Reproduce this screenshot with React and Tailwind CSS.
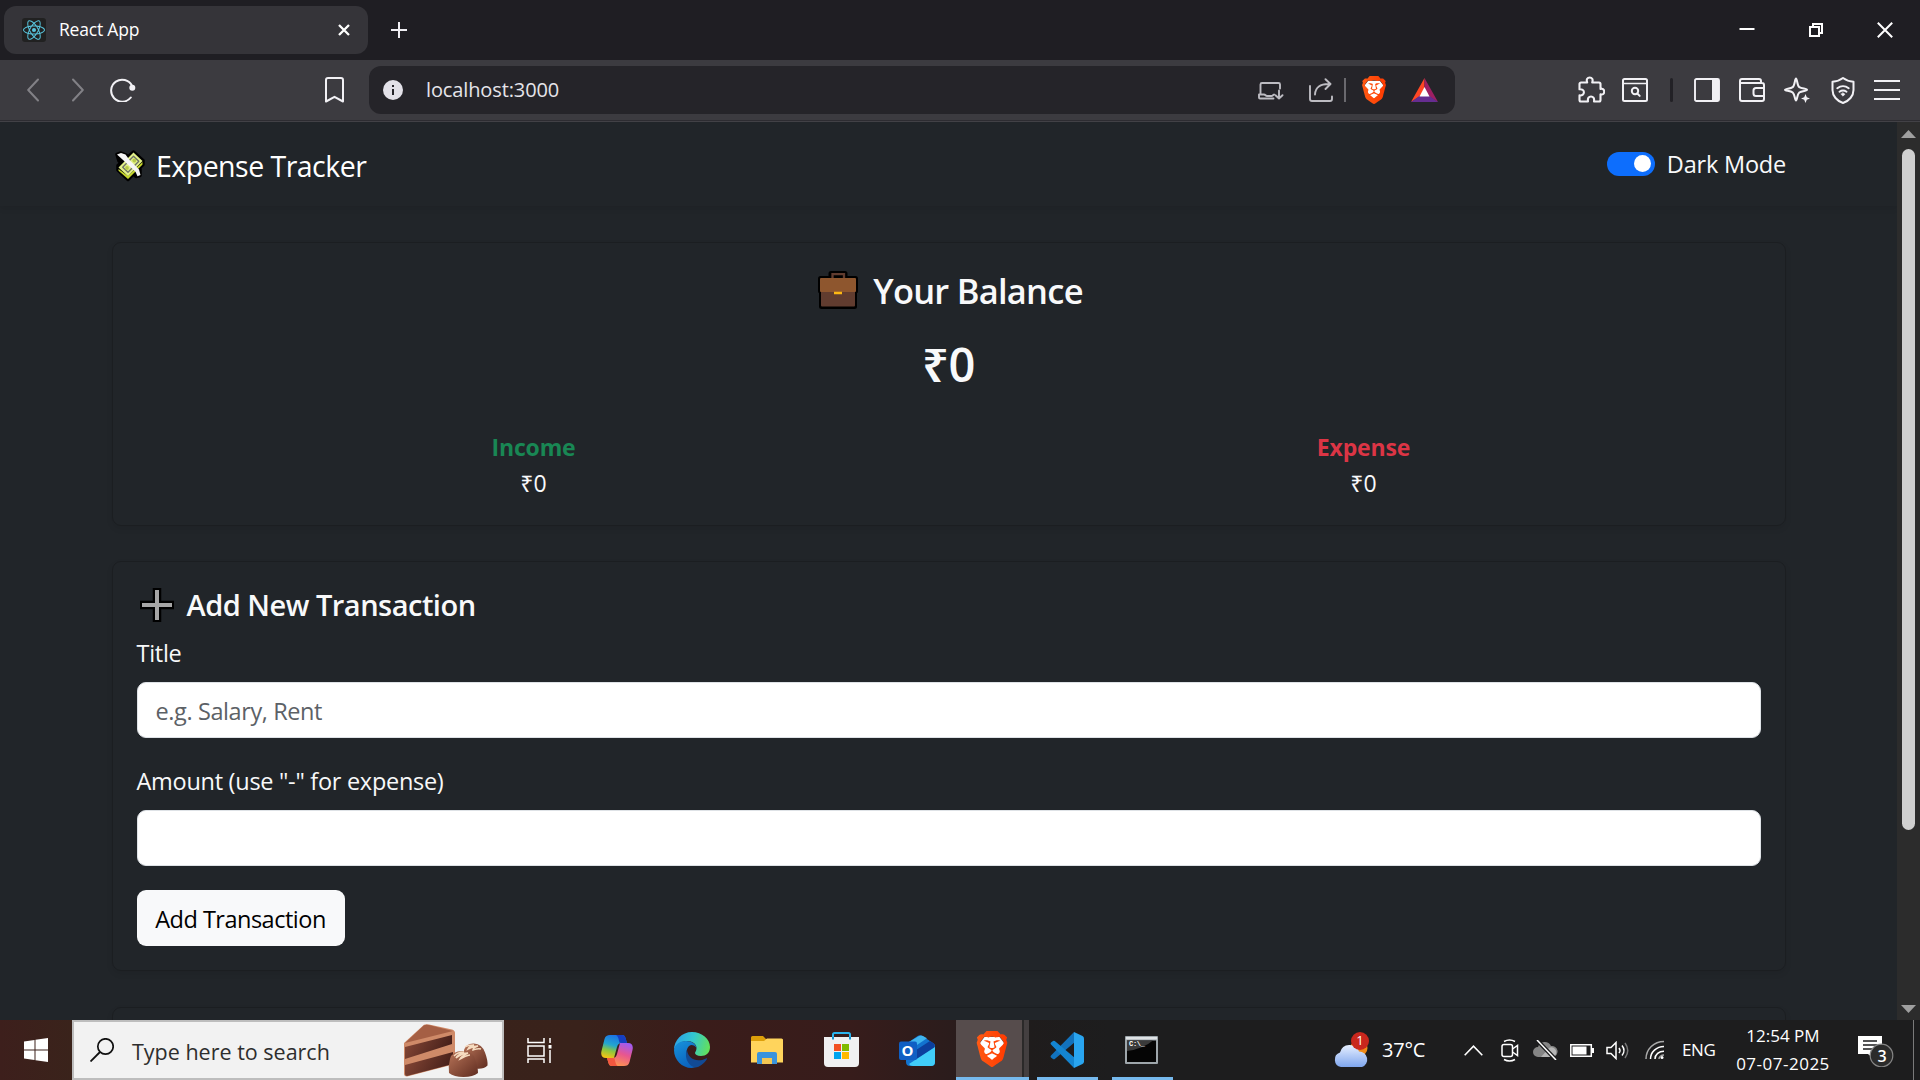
import { SiBrave, SiReact } from "react-icons/si";

const stroke = { fill: "none", stroke: "currentColor", strokeLinecap: "round", strokeLinejoin: "round" };

function Lion({ className, id }) {
  return (
    <span className={`relative block flex-none ${className}`}>
      <svg viewBox="0 0 24 24" className="absolute inset-0 h-full w-full">
        <path d="M7 4h10l3 4-3 9-5 4-5-4-3-9z" fill="#fff" />
      </svg>
      <svg width="0" height="0" className="absolute">
        <linearGradient id={id} x1="0" x2="1">
          <stop offset="0" stopColor="#ff5a14" />
          <stop offset="1" stopColor="#ff3a00" />
        </linearGradient>
      </svg>
      <SiBrave className="absolute inset-0 h-full w-full" style={{ fill: `url(#${id})` }} />
    </span>
  );
}

function TabBar() {
  return (
    <div className="flex h-[60px] flex-none items-center bg-[#1f1e23] pl-1 text-white">
      <div className="flex h-12 w-[364px] items-center rounded-xl bg-[#353439] pl-[18px] pr-[18px]">
        <span className="flex h-6 w-6 items-center justify-center rounded-[3px] bg-[#212121]">
          <SiReact className="h-[22px] w-[22px] text-[#58c4dc]" />
        </span>
        <span className="mb-0.5 ml-[13px] flex-1 text-[17.5px] tracking-[-0.2px]">React App</span>
        <svg className="h-3 w-3" viewBox="0 0 12 12">
          <path d="M1 1l10 10M11 1L1 11" stroke="#fff" strokeWidth="2.3" />
        </svg>
      </div>
      <svg className="ml-[23px] h-4 w-4" viewBox="0 0 16 16">
        <path d="M8 0v16M0 8h16" stroke="#f0eff3" strokeWidth="2" />
      </svg>
      <div className="ml-auto flex items-center pr-[27px]">
        <svg className="h-4 w-4" viewBox="0 0 16 16">
          <path d="M.5 7h15" stroke="#fff" strokeWidth="2" />
        </svg>
        <svg className="ml-[53px] h-4 w-4" viewBox="0 0 16 16">
          <path d="M2 5h9v9h-9zM5 5v-3h9v9h-3" fill="none" stroke="#fff" strokeWidth="2" />
        </svg>
        <svg className="ml-[53px] h-4 w-4" viewBox="0 0 16 16">
          <path d="M.8.8l14.400 14.400M15.200.8L.8 15.200" stroke="#fff" strokeWidth="2" />
        </svg>
      </div>
    </div>
  );
}

function ToolBar() {
  return (
    <div className="flex h-[62px] flex-none items-center border-b border-[#424146] bg-[#3c3b40] pb-px pl-[27px] text-[#f2f1f5] shadow-[inset_0_-1px_0_#2d2c31]">
      <svg className="h-6 w-3 text-[#828186]" viewBox="0 0 12 24" {...stroke} strokeWidth="2">
        <path d="M11 1.500L1.200 12 11 22.500" />
      </svg>
      <svg className="ml-[33px] h-6 w-3 text-[#828186]" viewBox="0 0 12 24" {...stroke} strokeWidth="2">
        <path d="M1 1.500L10.800 12 1 22.500" />
      </svg>
      <svg className="mb-px ml-[26px] h-6 w-[26px]" viewBox="0 0 26 24" {...stroke} strokeWidth="2">
        <path d="M20.800 19.500A11 11 0 1 1 22 7.800" />
        <circle cx="22.300" cy="9.800" r="3" fill="currentColor" stroke="none" />
      </svg>
      <svg className="ml-[189px] h-[26px] w-[19px]" viewBox="0 0 19 26" {...stroke} strokeWidth="2">
        <path d="M1 24.500V3a2 2 0 0 1 2-2h13a2 2 0 0 1 2 2v21.500l-8.500-4.700z" />
      </svg>
      <div className="ml-[25px] flex h-12 w-[1086px] flex-none items-center rounded-xl bg-[#252429] pl-[14px]">
        <svg className="h-5 w-5" viewBox="0 0 20 20">
          <circle cx="10" cy="10" r="10" fill="#e3e1e8" />
          <path d="M10 9v6M10 5v2" stroke="#252429" strokeWidth="2" />
        </svg>
        <span className="ml-[23px] text-[20px] tracking-[-0.12px] text-[#e6e4ea]">localhost:3000</span>
        <div className="ml-auto flex items-center pr-[17px] text-[#bdbcc2]">
          <svg className="mt-0.5 h-[18px] w-[26px]" viewBox="0 0 26 18" {...stroke} strokeWidth="1.900">
            <path d="M2.500 12.500V2.500A1.500 1.500 0 0 1 4 1h16.500A1.500 1.500 0 0 1 22 2.500v4M15.500 16.500H2A1 1 0 0 1 1 15.500v-3h5c1.500 0 1.500 1.500 3 1.500h4.500c1 0 1.500-1 2.500-1.500M21 8.500v8M17.500 13.200l3.500 3.300 3.500-3.300" />
          </svg>
          <svg className="ml-[25px] h-6 w-6" viewBox="0 0 24 24" {...stroke} strokeWidth="1.900">
            <path d="M1 8v13a2 2 0 0 0 2 2h18a2 2 0 0 0 2-2v-2.500M6 16.500C6.300 9.500 11 5.500 21 6M16.500 1.200l5 4.800-5 5" />
          </svg>
          <span className="ml-[11px] h-6 w-0.5 bg-[#6a696e]" />
          <Lion id="lion-a" className="ml-[14px] h-7 w-7" />
          <svg className="ml-[23px] h-6 w-[27px]" viewBox="0 0 27 24">
            <path d="M13.500 0L0 24l9.500-6 4-8z" fill="#ff4724" />
            <path d="M13.500 0L27 24l-9.500-6-4-8z" fill="#9e1f63" />
            <path d="M0 24l9-6.500h9L27 24z" fill="#662d91" />
            <path d="M13.500 9l-5 9.500h10z" fill="#fff" />
          </svg>
        </div>
      </div>
      <svg className="mb-0.5 ml-[123px] h-[27px] w-[27px]" viewBox="0 0 27 27" {...stroke} strokeWidth="2.100">
        <path d="M3 6.500h6.200C8 3.200 9.500 1.500 11.700 1.500s3.700 1.700 2.500 5H21a1.500 1.500 0 0 1 1.500 1.500v5c2.500-.7 3.700.8 3.700 2.700s-1.200 3.400-3.700 2.600V24a1.500 1.500 0 0 1-1.500 1.500h-5c.6-3.500-1-5-3-5s-3.600 1.500-3 5H3A1.500 1.500 0 0 1 1.500 24v-4.600c3 .3 4.400-1.200 4.400-3.100s-1.400-3.300-4.400-3V8A1.500 1.500 0 0 1 3 6.500z" />
      </svg>
      <svg className="ml-[17px] h-6 w-[26px]" viewBox="0 0 26 24" {...stroke} strokeWidth="2">
        <rect x="1" y="1" width="24" height="22" rx="1.500" />
        <path d="M1 5.500h24" strokeWidth="1.600" />
        <circle cx="13" cy="13" r="3.200" />
        <path d="M15.300 15.500l2.400 2.400" />
      </svg>
      <span className="ml-[22px] h-6 w-[3px] rounded bg-[#222126]" />
      <svg className="ml-[21px] h-6 w-[26px]" viewBox="0 0 26 24">
        <rect x="1" y="1" width="24" height="22" rx="1.500" fill="none" stroke="#f2f1f5" strokeWidth="1.900" />
        <path d="M18 1h7v22h-7z" fill="#f2f1f5" />
      </svg>
      <svg className="ml-[19px] h-6 w-[26px]" viewBox="0 0 26 24" {...stroke} strokeWidth="2">
        <path d="M1 5V3a2 2 0 0 1 2-2h17a2 2 0 0 1 2 2v2M1 3v18a2 2 0 0 0 2 2h20a2 2 0 0 0 2-2V7a2 2 0 0 0-2-2H1M25 10h-8a2.500 2.500 0 0 0-2.500 2.500v3A2.500 2.500 0 0 0 17 18h8" />
      </svg>
      <svg className="ml-[19px] h-[27px] w-[27px]" viewBox="0 0 27 27" {...stroke} strokeWidth="2">
        <path d="M12 1.500c1.200 0 1 7 3.300 8.600S23 11.500 23 12.800s-5.400.8-7.700 2.700S13.200 23.500 12 23.500s-1-6-3.300-8S1 14 1 12.800s5.400-1 7.700-2.700S10.800 1.500 12 1.500z" />
        <path d="M21.500 17l1.300 3.200 3.200 1.300-3.200 1.300-1.300 3.200-1.300-3.200-3.200-1.300 3.200-1.300z" fill="currentColor" stroke="none" />
      </svg>
      <svg className="ml-5 h-[27px] w-6" viewBox="0 0 24 27" {...stroke} strokeWidth="2">
        <path d="M12 1c3 2.300 6.500 3.500 10.500 3.700V13c0 6-4.500 11-10.500 13C6 24 1.500 19 1.500 13V4.700C5.500 4.500 9 3.300 12 1z" />
        <path d="M6.300 11.200c3.400-2.600 8-2.600 11.400 0M8.500 14.700c2.200-1.600 4.800-1.600 7 0" />
        <path d="M12 15.800l2 1.400-2 2-2-2z" fill="currentColor" strokeWidth="0.500" />
      </svg>
      <svg className="ml-[19px] h-6 w-[26px]" viewBox="0 0 26 24">
        <path d="M0 3h26M0 12h26M0 21h26" stroke="#f2f1f5" strokeWidth="2" />
      </svg>
    </div>
  );
}

function MoneyIcon() {
  return (
    <svg className="h-8 w-[30px] flex-none" viewBox="0 0 30 32">
      <g strokeLinejoin="round">
        <path d="M18.500 2L28 10.500v4L13 29.500l-10-9.500v-4.500z" fill="#000" stroke="#000" strokeWidth="3.500" />
        <path d="M2 4.500l4-1.500 5 2 14 14.500v6l-4 1L4 11z" fill="#000" stroke="#000" strokeWidth="3.500" />
        <path d="M3.500 19v1.800L13 29l14.500-14.500v-2.500L13 26z" fill="#c5d62d" />
        <path d="M18.500 2.500L27.500 11 13 26.200 3.500 17.500z" fill="#e2f088" />
        <path d="M18.500 6.300l5.300 5L13 22.300l-5.300-5z" fill="none" stroke="#6d7168" strokeWidth="1.300" />
        <circle cx="19.300" cy="10.500" r="1.900" fill="#b6c94a" />
        <circle cx="12" cy="18" r="1.900" fill="#b6c94a" />
        <path d="M2 4.500l4-1.500 4.500 1.500 4 5.500 9.500 9.500 1.500 5.500-3 1.200-2-4.500-10-9.500-5.500-5z" fill="#f5f5f5" />
      </g>
    </svg>
  );
}

function Briefcase() {
  return (
    <svg className="h-[38px] w-10 flex-none" viewBox="0 0 40 38">
      <path d="M13 7V2.500L14.500 2.500h11L27 2.500V7" fill="none" stroke="#000" strokeWidth="5" strokeLinejoin="round" />
      <rect x="0" y="5" width="40" height="17.500" rx="2.500" fill="#000" />
      <rect x="1" y="12" width="38" height="26" rx="2.500" fill="#000" />
      <path d="M14.500 7V3.200h11.500v4" fill="none" stroke="#613c2f" strokeWidth="2.300" />
      <rect x="3" y="20" width="34" height="15.500" rx="1" fill="#613c2f" />
      <rect x="2" y="7" width="36" height="14" rx="1" fill="#8e562e" />
      <path d="M16 22h8" stroke="#fdb813" strokeWidth="2.500" />
    </svg>
  );
}

function PlusEmoji() {
  return (
    <svg className="h-[34px] w-[34px] flex-none" viewBox="0 0 34 34">
      <path d="M17 0v34M0 17h34" stroke="#000" strokeWidth="8.500" />
      <path d="M17 2v30M2 17h30" stroke="#a6a6a6" strokeWidth="4" />
    </svg>
  );
}

const CARD = "mx-auto w-[1674px] rounded-[9px] border border-[#1b1e21] shadow-[0_3px_6px_rgba(0,0,0,0.075)]";

function Page() {
  return (
    <main className="flex min-h-0 flex-1 bg-[#212529] text-[#f8f9fa]">
      <div className="flex-1 overflow-hidden">
        <nav className="flex h-[84px] items-center justify-between pl-[115px] pr-[111px] shadow-[0_3px_6px_rgba(0,0,0,0.075)]">
          <div className="flex items-center pt-[3px] text-white">
            <MoneyIcon />
            <span className="ml-[11px] text-[28.5px] leading-[42px] tracking-[-0.52px]">Expense Tracker</span>
          </div>
          <label className="flex items-center text-[23.5px] tracking-[-0.2px]">
            <span className="mb-px flex h-6 w-12 items-center justify-end rounded-full bg-[#0d6efd] pr-1">
              <span className="h-[17px] w-[17px] rounded-full bg-white" />
            </span>
            <span className="ml-3 mt-0.5">Dark Mode</span>
          </label>
        </nav>

        <section className={`${CARD} mt-9 h-[284px] p-6`}>
          <div className="flex h-[43px] items-center justify-center pl-1 pt-[3px]">
            <Briefcase />
            <h4 className="ml-[15px] text-[34.5px] font-semibold leading-[43px] tracking-[-0.75px]">Your Balance</h4>
          </div>
          <h2 className="mt-[25px] text-center text-[47px] font-semibold leading-[58px] tracking-[-0.5px]">₹0</h2>
          <div className="-mx-[18px] mt-[36px] grid grid-cols-2 text-center text-[23px] leading-9">
            <div>
              <p className="font-bold tracking-[-0.15px] text-[#198754]">Income</p>
              <p>₹0</p>
            </div>
            <div>
              <p className="font-bold tracking-[-0.15px] text-[#dc3545]">Expense</p>
              <p>₹0</p>
            </div>
          </div>
        </section>

        <section className={`${CARD} mt-[35px] h-[410px] px-6 pt-[25px]`}>
          <div className="flex h-9 items-center pl-[3px]">
            <PlusEmoji />
            <h5 className="ml-[13px] text-[29px] font-semibold leading-9 tracking-[-0.5px]">Add New Transaction</h5>
          </div>
          <div className="mt-3 text-[23.5px] leading-9 tracking-[-0.28px]">
            <label className="block">Title</label>
            <div className="mt-[11px] flex h-14 items-center rounded-[9px] border border-[#dee2e6] bg-white px-[18px] pt-0.5 text-[#5c6166]">
              <span className="tracking-[-0.4px]">e.g. Salary, Rent</span>
            </div>
            <label className="mt-[25px] block">Amount (use "-" for expense)</label>
            <div className="mt-[11px] h-14 rounded-[9px] border border-[#dee2e6] bg-white" />
            <button className="mt-6 h-14 w-52 rounded-[9px] bg-[#f8f9fa] pt-0.5 tracking-[-0.5px] text-black">Add Transaction</button>
          </div>
        </section>

        <section className={`${CARD} mt-9 h-40`} />
      </div>

      <div className="flex w-[23px] flex-none flex-col items-center bg-[#2c2c2c]">
        <svg className="mt-2 h-2 w-[15px]" viewBox="0 0 15 8"><path d="M7.500 0L15 8H0z" fill="#9f9f9f" /></svg>
        <div className="mt-[11px] h-[681px] w-[13px] rounded-full bg-[#d0d0d0]" />
        <svg className="mb-[7px] mt-auto h-2 w-[15px]" viewBox="0 0 15 8"><path d="M7.500 8L15 0H0z" fill="#9f9f9f" /></svg>
      </div>
    </main>
  );
}

function Cake() {
  return (
    <svg className="h-[53px] w-[84px] flex-none" viewBox="0 0 84 53">
      <defs>
        <linearGradient id="cake" x1="0" x2="1" y2="0.300"><stop offset="0" stopColor="#8a4a38" /><stop offset="1" stopColor="#47201a" /></linearGradient>
        <linearGradient id="choc" x1="0" y1="0" x2="1" y2="1"><stop offset="0" stopColor="#b87458" /><stop offset="1" stopColor="#5f2c20" /></linearGradient>
      </defs>
      <path d="M0 19L20 .8Q22 0 25 .6L48 5.500Q51 6.500 51 9v31L3 52.500Q0 52 0 50z" fill="#cf8a68" />
      <path d="M1 19L20 1.200Q22 .4 25 1L49 7z" fill="#a55f44" />
      <path d="M1 23L48 11v9L1 35z" fill="url(#cake)" />
      <path d="M1 41l48-13v12L3 52q-2 0-2-2z" fill="url(#cake)" />
      <path d="M60 26Q62 19 70 19.500t11 9q3 8 2.500 13-4 4-12 3L60 36z" fill="url(#choc)" />
      <path d="M46 35Q48 27 58.500 27T71 35q3 8 3 14-5 4-14.500 4T45 49q-1-7 1-14z" fill="url(#choc)" />
      <path d="M50 32c3-3 7-4 10-4-4 2-7 4-8 6 4-3 8-5 12-5-4 2-7 4-8 6 4-2 7-4 10-4M61 23c3-2 6-2 9-2-3 1-5 2-6 4 4-2 7-3 10-3-3 1-5 2-5 4 3-1 5-2 8-1" fill="none" stroke="#f6dcc0" strokeWidth="1.500" />
    </svg>
  );
}

function Copilot() {
  return (
    <svg className="h-[31px] w-8" viewBox="0 0 32 31">
      <defs>
        <linearGradient id="co-a" x1="0.600" y1="0" x2="0.300" y2="1"><stop offset="0" stopColor="#1b6fe8" /><stop offset="0.450" stopColor="#23a6cf" /><stop offset="0.700" stopColor="#8cc63f" /><stop offset="1" stopColor="#f3c316" /></linearGradient>
        <linearGradient id="co-b" x1="0.700" y1="0" x2="0.300" y2="1"><stop offset="0" stopColor="#a05bf0" /><stop offset="0.450" stopColor="#e8568f" /><stop offset="1" stopColor="#ff9a4a" /></linearGradient>
      </defs>
      <path d="M15 0h6c2 0 3 1 3.500 3l1.500 5h-5c-3 0-4 1-5 4l-3 11H5c-4 0-5.500-3-4.500-7l3-12C4.500 1 6 0 9 0z" fill="url(#co-a)" />
      <path d="M15 0h6c2 0 3 1 3.500 3l1.500 5h-5l-2.500-.2C17.500 3 17 1 15 0z" fill="#153ec2" />
      <path d="M17 31h-6c-2 0-3-1-3.500-3L6 23h5c3 0 4-1 5-4l3-11h8c4 0 5.500 3 4.500 7l-3 12c-1 3-2.500 4-5.500 4z" fill="url(#co-b)" />
      <path d="M17 31h-6c-2 0-3-1-3.500-3L6 23h5l2.500.2c1 4.800 1.500 6.800 3.500 7.800z" fill="#f2573f" />
    </svg>
  );
}

function Edge() {
  return (
    <svg className="h-9 w-9" viewBox="0 0 36 36">
      <defs>
        <linearGradient id="ed-a" x1="0" y1="0.300" x2="1" y2="0.500"><stop offset="0" stopColor="#2b9fe6" /><stop offset="0.500" stopColor="#33c7d0" /><stop offset="1" stopColor="#62e05d" /></linearGradient>
        <linearGradient id="ed-b" x1="0" y1="0" x2="0.500" y2="1"><stop offset="0" stopColor="#1793dc" /><stop offset="1" stopColor="#0b62bd" /></linearGradient>
      </defs>
      <path d="M0 18C0 8 8 0 18 0s18 7 18 15c0 6-4 9-9 9-4 0-6-1.500-6-3 0-1 1.500-2 1.500-5 0-4-4-7-9.500-7C7 9 1.500 13 0 18z" fill="url(#ed-a)" />
      <path d="M0 18C1 12 6 9 12 9c6 0 10 3 10.500 7-1-2-3-3-5-3-3 0-5 4-5 8 0 7 6 12 12 12-2 2-5 3-7 3C8 36 0 28 0 18z" fill="url(#ed-b)" />
      <path d="M13 18c-2 3-2 14 8 17.600 5-.6 9-4 12-8.600.5-1-.3-1-1-.6-9 4.500-18 .6-19-8.400z" fill="#124a94" />
    </svg>
  );
}

function Explorer() {
  return (
    <svg className="h-7 w-8" viewBox="0 0 32 28">
      <path d="M0 1.500Q0 0 1.500 0H12l3 3H30.500Q32 3 32 4.500V24H0z" fill="#dd9f0a" />
      <path d="M0 5h13l3-2.500h14.500Q32 2.500 32 4v22.500H0z" fill="#ffd45c" />
      <path d="M6 28V18q0-2 2-2h16q2 0 2 2v10h-5v-6H11v6z" fill="#3a93dc" />
      <path d="M11 28v-6h10v6z" fill="#f3c653" />
    </svg>
  );
}

function Store() {
  return (
    <svg className="h-9 w-[35px]" viewBox="0 0 35 36">
      <path d="M9 9V2.500Q9 1 10.500 1h14Q26 1 26 2.500V9" fill="none" stroke="#2bb4ee" strokeWidth="2" />
      <path d="M0 5h35v26q0 4-4 4H4q-4 0-4-4z" fill="#f0f0f1" />
      <path d="M9 5v2.500M26 5v2.500" stroke="#1593cf" strokeWidth="2" />
      <path d="M10 12h7v7h-7z" fill="#f25022" /><path d="M18 12h7v7h-7z" fill="#7fba00" />
      <path d="M10 20h7v7h-7z" fill="#00a4ef" /><path d="M18 20h7v7h-7z" fill="#ffb900" />
    </svg>
  );
}

function Outlook() {
  return (
    <span className="relative block h-[31px] w-9">
      <svg className="h-full w-full" viewBox="0 0 36 31">
        <path d="M7 9L19 .8q2-1 4 0L34 8q2 1 2 3v16q0 4-4 4H11q-4 0-4-4z" fill="#1273cf" />
        <path d="M10 7l10-6q2-1 4 0l4 2.300L12 14z" fill="#3fb4ee" />
        <path d="M14 17L31 6l4.500 3v4L17 25z" fill="#0c3f9d" />
        <path d="M36 12v15q0 4-4 4H14q-3 0-4-2z" fill="#41cdf8" />
        <rect y="6.500" width="18" height="18.500" rx="2" fill="#0f5fc4" />
      </svg>
      <span className="absolute left-0 top-[6px] w-[18px] text-center text-[15px] font-bold leading-[19px] text-white">O</span>
    </span>
  );
}

function VSCode() {
  return (
    <svg className="h-9 w-9" viewBox="0 0 36 36">
      <path d="M26 0L3 23.500q-1 1 0 2L5 27q.8.600 1.800 0L27 10z" fill="#1272bd" />
      <path d="M26 36L3 12.500q-1-1 0-2L5 9q.8-.6 1.800 0L27 26z" fill="#1485d1" />
      <path d="M26 0l8.500 4q1.500.8 1.500 2.500v23q0 1.700-1.500 2.500L26 36z" fill="#29a5f0" />
    </svg>
  );
}

function Cmd() {
  return (
    <span className="relative block h-7 w-[33px]">
      <svg className="h-full w-full" viewBox="0 0 33 28">
        <rect width="33" height="28" rx="1" fill="#9ea6ab" />
        <path d="M1 1h31v2.500H1z" fill="#dfe3e6" />
        <path d="M2 4.500h29V26H2z" fill="#050505" />
        <path d="M2 4.500h26Q18 13 2 15z" fill="#3a3a3a" />
      </svg>
      <span className="absolute left-[4px] top-[4px] font-['Liberation_Mono'] text-[7px] font-bold leading-[8px] tracking-[-0.3px] text-white">C:\_</span>
    </span>
  );
}

function TaskView() {
  return (
    <svg className="mr-[3px] h-[25px] w-[26px]" viewBox="0 0 26 25">
      <path d="M1 0v4.500h16V0M1 8h16v10H1zM1 25v-4h16v4M23 0v5M23 12v13" fill="none" stroke="#fff" strokeWidth="1.500" />
      <path d="M21.500 7h3v3.500h-3z" fill="#fff" />
    </svg>
  );
}

function Tray() {
  return (
    <div className="ml-auto flex h-full items-center text-white">
      <span className="relative block h-[35px] w-9 flex-none">
        <svg className="h-full w-full" viewBox="0 0 36 35">
          <defs><linearGradient id="cl" x1="0" y1="0" x2="0" y2="1"><stop offset="0" stopColor="#e6efff" /><stop offset="1" stopColor="#7fa6ee" /></linearGradient></defs>
          <circle cx="26" cy="15" r="8.500" fill="#f08a16" />
          <path d="M8 34a7.500 7.500 0 0 1-1-14.500 10 10 0 0 1 19-1 8 8 0 0 1 3 15.500z" fill="url(#cl)" />
        </svg>
        <span className="absolute -top-px left-[18px] flex h-[18px] w-[18px] items-center justify-center rounded-full bg-[#c9271d] text-[13px]">1</span>
      </span>
      <span className="ml-[13px] w-[46px] text-[20px] tracking-[-0.2px]">37°C</span>
      <svg className="ml-9 h-[11px] w-[19px]" viewBox="0 0 19 11"><path d="M.7 10.300L9.500 1.200l8.800 9.100" fill="none" stroke="#fff" strokeWidth="1.600" /></svg>
      <svg className="ml-[18px] h-[23px] w-[18px]" viewBox="0 0 18 23" fill="none" stroke="#fff" strokeWidth="1.500">
        <rect x="1" y="5.500" width="10.500" height="12" rx="2" /><path d="M11.500 10l5-3.500v10l-5-3.500M3 2.500Q8.500-.5 14 2.500M3 20.500q5.500 3 11 0" />
      </svg>
      <svg className="ml-[14px] h-5 w-[25px]" viewBox="0 0 25 20">
        <path d="M5 17a5 5 0 0 1 0-10A7 7 0 0 1 18 6a5.500 5.500 0 0 1 2 11z" fill="#858585" />
        <path d="M8 17l8-9a5 5 0 0 1 6 1 5 5 0 0 1-2 8z" fill="#b5b5b5" />
        <path d="M4 0l19 20" stroke="#1d1d1e" strokeWidth="4" /><path d="M4 0l19 20" stroke="#fff" strokeWidth="1.500" />
      </svg>
      <svg className="ml-3 h-[13px] w-[24px]" viewBox="0 0 24 13"><path d="M.8.800h20.500v11.400H.8z" fill="none" stroke="#fff" strokeWidth="1.500" /><path d="M2.500 2.500h14v8h-14zM21.500 4H24v5h-2.500z" fill="#fff" /></svg>
      <svg className="ml-3 h-[19px] w-6" viewBox="0 0 24 19" fill="none" stroke="#fff" strokeWidth="1.500">
        <path d="M1 6.500h4L10 1.500v16l-5-5H1z" /><path d="M13 7q2 2.500 0 5M16 4.500q4 5 0 10" /><path d="M19 2q5.500 7.500 0 15" stroke="#777" />
      </svg>
      <svg className="ml-[15px] h-5 w-5" viewBox="0 0 20 20" fill="none" stroke="#fff" strokeWidth="1.500">
        <path d="M1 19C1 9 9 1.500 19 1.500" stroke="#aaa" /><path d="M5.500 19c0-7 6-12.500 13.500-12.500M10 19c0-4.500 4-7.800 9-7.800" /><path d="M14 19c0-2 2-4 5-4" stroke="#aaa" /><circle cx="17" cy="17.500" r="1.500" fill="#fff" stroke="none" />
      </svg>
      <span className="ml-[17px] w-9 text-[17px] tracking-[-0.4px]">ENG</span>
      <div className="ml-[15px] w-[100px] text-center text-[17px] leading-7">
        <p>12:54 PM</p>
        <p className="tracking-[0.500px]">07-07-2025</p>
      </div>
      <span className="relative -mt-0.5 ml-[25px] block h-[35px] w-9 pt-0">
        <svg className="h-full w-full" viewBox="0 0 36 35">
          <path d="M0 4h24v18h-7v6l-7-6H0z" fill="#fff" />
          <path d="M5 9h14M5 13h14M5 17h9" stroke="#1d1d1e" strokeWidth="1.500" />
          <circle cx="23.500" cy="23.500" r="11.300" fill="#2b2b2b" stroke="#858585" strokeWidth="1.200" />
        </svg>
        <span className="absolute left-[12px] top-[12px] w-6 text-center text-[16px] font-semibold leading-6">3</span>
      </span>
      <span className="ml-[19px] mr-[6px] h-full w-px bg-[#7a7a7a]" />
    </div>
  );
}

function TaskBar() {
  const cell = "flex h-full w-[75px] flex-none items-center justify-center";
  return (
    <footer className="flex h-[60px] flex-none items-center bg-[linear-gradient(90deg,#3d1f1c_0px,#3a231b_72px,#39221b_580px,#3a1c1a_700px,#371c1b_850px,#2b1c1c_950px,#1f1c1c_1030px,#1d1d1e_1110px)]">
      <div className="flex h-full w-[72px] items-center justify-center">
        <svg className="h-6 w-6" viewBox="0 0 24 24"><path d="M0 3.500L10.500 2v9.500H0zM11.500 1.800L24 0v11.500H11.500zM0 12.500h10.500V22L0 20.500zM11.500 12.500H24V24l-12.500-1.800z" fill="#fff" /></svg>
      </div>
      <div className="flex h-full w-[432px] flex-none items-center border-2 border-[#bdbdbd] bg-[#f2f2f2] pl-4 pr-[14px]">
        <svg className="h-6 w-6" viewBox="0 0 24 24"><circle cx="15.500" cy="8.500" r="7.700" fill="none" stroke="#111" strokeWidth="1.700" /><path d="M10 14L.5 23.500" stroke="#111" strokeWidth="1.800" /></svg>
        <span className="ml-[18px] mt-1 flex-1 text-[21.500px] text-[#2e2e2e]">Type here to search</span>
        <Cake />
      </div>
      <div className={cell}><TaskView /></div>
      <div className={cell}><Copilot /></div>
      <div className={cell}><Edge /></div>
      <div className={cell}><Explorer /></div>
      <div className={cell}><Store /></div>
      <div className={cell}><Outlook /></div>
      <div className="ml-0.5 flex h-full w-[73px] flex-none border-b-[3px] border-[#76b9ed] bg-[#443f40]">
        <div className="flex h-full w-[68px] items-center justify-center border-r-2 border-[#2b2929] bg-[#564c4c] pl-[5px]">
          <Lion id="lion-b" className="h-9 w-9" />
        </div>
      </div>
      <div className="ml-2 flex h-full w-[61px] flex-none items-center justify-center border-b-[3px] border-[#76b9ed] pr-[3px] pt-[3px]"><VSCode /></div>
      <div className="ml-[14px] flex h-full w-[61px] flex-none items-center justify-center border-b-[3px] border-[#76b9ed] pr-0.5 pt-[3px]"><Cmd /></div>
      <Tray />
    </footer>
  );
}

export default function App() {
  return (
    <div className="flex h-[1080px] w-[1920px] flex-col overflow-hidden font-['Open_Sans','Noto_Sans',sans-serif]">
      <TabBar />
      <ToolBar />
      <Page />
      <TaskBar />
    </div>
  );
}
